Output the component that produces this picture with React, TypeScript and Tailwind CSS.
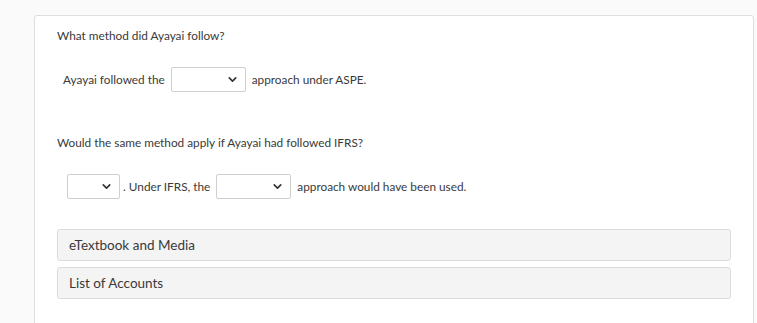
import { ChevronDown } from 'lucide-react'

function Select({ width }: { width: string }) {
  return (
    <span className={`inline-flex h-[25px] ${width} items-center justify-end rounded-[2px] border border-[#cfcfcf] bg-white pr-[6px] align-middle`}>
      <ChevronDown className="h-[13px] w-[13px] text-[#333]" strokeWidth={3} />
    </span>
  )
}

function Panel({ label }: { label: string }) {
  return (
    <div className="flex h-[32px] items-center rounded-[3px] border border-[#dcdcdc] bg-[#f4f4f4] px-[11px] text-[13.5px] text-[#3a3a3a]">
      {label}
    </div>
  )
}

export default function App() {
  return (
    <div className="min-h-[323px] bg-[#fafafa] pl-[34px] pr-[3px] pt-[15px] font-['Lato',sans-serif] text-[11.8px] text-[#3a3a3a]">
      <div className="h-[320px] rounded-tl-[3px] rounded-tr-[3px] border border-[#dedede] bg-white pl-[22px] pr-[22px] pt-[12px]">
        <p className="leading-[16px]">What method did Ayayai follow?</p>

        <div className="mt-[23px] flex items-center gap-[6px] pl-[6px]">
          <span>Ayayai followed the</span>
          <Select width="w-[75px]" />
          <span>approach under ASPE.</span>
        </div>

        <p className="mt-[43px] leading-[16px]">Would the same method apply if Ayayai had followed IFRS?</p>

        <div className="mt-[23px] flex items-center pl-[10px]">
          <Select width="w-[53px]" />
          <span className="ml-[3px]">. Under IFRS, the</span>
          <span className="ml-[6px]">
            <Select width="w-[75px]" />
          </span>
          <span className="ml-[6px]">approach would have been used.</span>
        </div>

        <div className="mt-[30px] flex flex-col gap-[6px]">
          <Panel label="eTextbook and Media" />
          <Panel label="List of Accounts" />
        </div>
      </div>
    </div>
  )
}
